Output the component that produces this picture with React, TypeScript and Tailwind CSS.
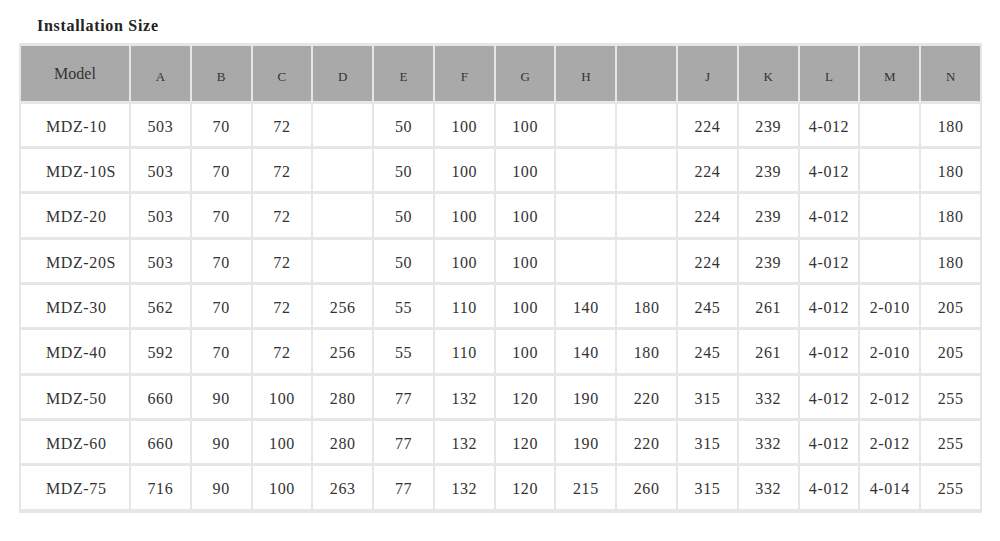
import React from "react";

const headers = ["A", "B", "C", "D", "E", "F", "G", "H", "", "J", "K", "L", "M", "N"];

const rows: [string, string[]][] = [
  ["MDZ-10", ["503", "70", "72", "", "50", "100", "100", "", "", "224", "239", "4-012", "", "180"]],
  ["MDZ-10S", ["503", "70", "72", "", "50", "100", "100", "", "", "224", "239", "4-012", "", "180"]],
  ["MDZ-20", ["503", "70", "72", "", "50", "100", "100", "", "", "224", "239", "4-012", "", "180"]],
  ["MDZ-20S", ["503", "70", "72", "", "50", "100", "100", "", "", "224", "239", "4-012", "", "180"]],
  ["MDZ-30", ["562", "70", "72", "256", "55", "110", "100", "140", "180", "245", "261", "4-012", "2-010", "205"]],
  ["MDZ-40", ["592", "70", "72", "256", "55", "110", "100", "140", "180", "245", "261", "4-012", "2-010", "205"]],
  ["MDZ-50", ["660", "90", "100", "280", "77", "132", "120", "190", "220", "315", "332", "4-012", "2-012", "255"]],
  ["MDZ-60", ["660", "90", "100", "280", "77", "132", "120", "190", "220", "315", "332", "4-012", "2-012", "255"]],
  ["MDZ-75", ["716", "90", "100", "263", "77", "132", "120", "215", "260", "315", "332", "4-012", "4-014", "255"]],
];

export default function App() {
  return (
    <div className="w-[1000px] h-[541px] bg-white font-['Liberation_Serif',serif] text-[#333]">
      <div className="pt-[18px] pl-[37px] text-[16px] leading-[16px] font-bold tracking-[0.7px] text-[#222]">
        Installation Size
      </div>
      <div className="mt-[9px] ml-[19px] w-[963px] bg-[#e6e6e6] pt-[3px] px-[2px] pb-[4px]">
        <div className="grid grid-cols-[108px_repeat(14,minmax(0,1fr))] grid-rows-[55px_42px_42px_43px_42px_42px_43px_42px_42px_43px] gap-x-[2px] gap-y-[3px]">
          <div className="bg-[#a9a9a9] flex items-center justify-center text-[16px] pt-[1px]">Model</div>
          {headers.map((h, i) => (
            <div key={i} className="bg-[#a9a9a9] flex items-center justify-center text-[13px] pt-[7px]">
              {h}
            </div>
          ))}
          {rows.map(([model, vals]) => (
            <React.Fragment key={model}>
              <div className="bg-white flex items-center pl-[25px] pt-[3px] text-[16px] tracking-[0.6px]">
                {model}
              </div>
              {vals.map((v, j) => (
                <div key={j} className="bg-white flex items-center justify-center pt-[3px] text-[16px] tracking-[0.6px]">
                  {v}
                </div>
              ))}
            </React.Fragment>
          ))}
        </div>
      </div>
    </div>
  );
}
